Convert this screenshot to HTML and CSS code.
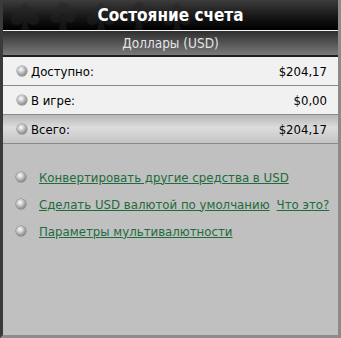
FILE: index.html
```html
<!DOCTYPE html>
<html>
<head>
<meta charset="utf-8">
<link rel="stylesheet" href="styles.css">
</head>
<body>
<div class="panel">
  <div class="title">
    <svg class="suits" width="200" height="31" viewBox="0 0 200 31" aria-hidden="true">
      <g fill="#262626">
        <path d="M22 2 C16 10 8 14 8 20 C8 25 14 27 20 22 L18 30 L26 30 L24 22 C30 27 36 25 36 20 C36 14 28 10 22 2 Z"/>
        <circle cx="60" cy="8" r="6"/><circle cx="53" cy="17" r="6"/><circle cx="67" cy="17" r="6"/><path d="M58 16 L56 30 L64 30 L62 16 Z"/>
        <path d="M98 2 C92 10 84 14 84 20 C84 25 90 27 96 22 L94 30 L102 30 L100 22 C106 27 112 25 112 20 C112 14 104 10 98 2 Z"/>
        <circle cx="136" cy="8" r="6"/><circle cx="129" cy="17" r="6"/><circle cx="143" cy="17" r="6"/><path d="M134 16 L132 30 L140 30 L138 16 Z"/>
        <path d="M174 2 C168 10 160 14 160 20 C160 25 166 27 172 22 L170 30 L178 30 L176 22 C182 27 188 25 188 20 C188 14 180 10 174 2 Z"/>
      </g>
    </svg>
    <span class="title-text">Состояние счета</span>
  </div>
  <div class="sub">Доллары (USD)</div>
  <div class="rows">
    <div class="row"><span class="ball"></span><span class="label">Доступно:</span><span class="val">$204,17</span></div>
    <div class="row"><span class="ball"></span><span class="label">В игре:</span><span class="val">$0,00</span></div>
    <div class="row total"><span class="ball"></span><span class="label">Всего:</span><span class="val">$204,17</span></div>
  </div>
  <div class="links">
    <div class="link-row"><span class="ball"></span><a href="#">Конвертировать другие средства в USD</a></div>
    <div class="link-row"><span class="ball"></span><a href="#">Сделать USD валютой по умолчанию</a><a href="#" class="what">Что это?</a></div>
    <div class="link-row"><span class="ball"></span><a href="#">Параметры мультивалютности</a></div>
  </div>
</div>
</body>
</html>
```
FILE: styles.css
```css
html, body { margin: 0; padding: 0; }
body { width: 341px; height: 338px; overflow: hidden; background: #c0c0c0; font-family: "DejaVu Sans Condensed", "DejaVu Sans", sans-serif; }
.panel {
  width: 341px; height: 338px; box-sizing: border-box;
  border-left: 3px solid #3a3a3a; border-right: 3px solid #8a8a8a; border-bottom: 3px solid #8c8c8c;
  background: #c0c0c0; display: flex; flex-direction: column;
}
.title {
  position: relative; height: 31px; box-sizing: border-box;
  background: linear-gradient(#3c3c3c, #141414 60%, #000);
  border-bottom: 1px solid #f4f4f4;
  display: flex; align-items: center; justify-content: center; overflow: hidden;
}
.suits { position: absolute; left: 0; top: 0; opacity: 0.45; }
.title-text { position: relative; color: #fff; font-size: 17px; font-weight: bold; }
.sub {
  height: 24px; background: linear-gradient(#2e2e2e, #7a7a7a);
  border-bottom: 2px solid #1e1e1e;
  color: #e4e4e4; font-size: 13.5px; display: flex; align-items: center; justify-content: center;
}
.row {
  height: 28px; background: #f1f1f1; border-bottom: 1px solid #8a8a8a;
  display: flex; align-items: center; padding: 0 11px 0 14px; font-size: 13px; color: #000;
}
.row.total { background: linear-gradient(#b8b8b8, #dcdcdc 45%, #c4c4c4); }
.label { flex: 1; margin-left: 4px; }
.ball {
  width: 10px; height: 10px; border-radius: 50%; flex: none;
  background: radial-gradient(circle at 40% 35%, #ffffff 0, #c8c8c8 35%, #6a6a6a 90%);
  box-shadow: 0 0 0 0.5px #777;
}
.links { padding: 25px 0 0 13px; display: flex; flex-direction: column; gap: 11px; }
.link-row { display: flex; align-items: center; height: 16px; font-size: 13.1px; }
.link-row .ball { margin-right: 13px; }
.link-row a { color: #1e6b3c; text-decoration: underline; }
.link-row a.what { margin-left: 7px; }
```
